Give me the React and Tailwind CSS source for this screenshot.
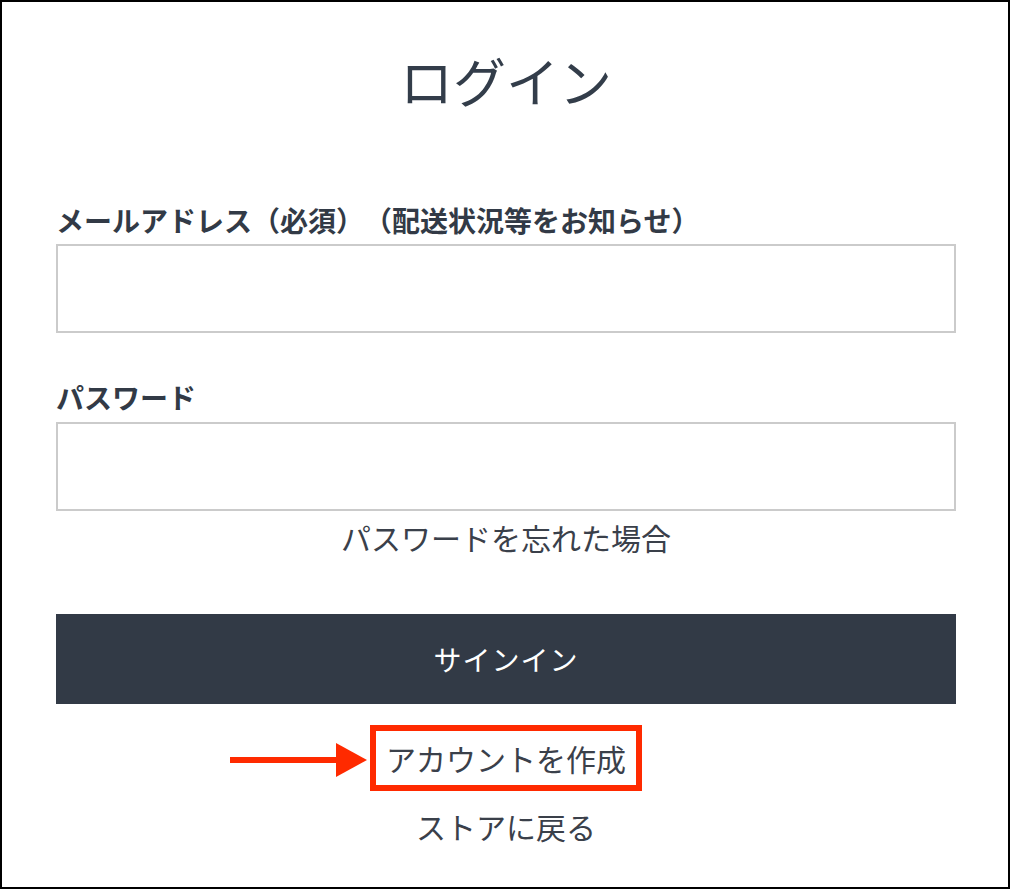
import React from 'react';

const font = { fontFamily: '"Noto Sans CJK JP", "Noto Sans", sans-serif' };

const Field = ({ label, labelClass, inputClass, type }) => (
    <>
        <label className={`block text-[28px] leading-[36px] font-bold text-[#323a46] [text-spacing-trim:space-all] ${labelClass}`}>{label}</label>
        <input
            type={type}
            className={`block w-full h-[89px] border-2 border-[#cbcbcb] bg-white outline-none px-4 text-[24px] ${inputClass}`}
        />
    </>
);

const App = () => {
    return (
        <div
            className="w-[1010px] h-[889px] border-2 border-black bg-white pl-[54px] pr-[52px] pt-[46px] text-[#323a46] flex flex-col"
            style={font}
        >
            <h1 className="text-center text-[53px] leading-[64px] font-normal text-[#333d4a]">ログイン</h1>

            <form className="flex flex-col" onSubmit={(e) => e.preventDefault()}>
                <Field label="メールアドレス（必須）（配送状況等をお知らせ）" labelClass="mt-[90px]" inputClass="mt-[6px]" type="email" />
                <Field label="パスワード" labelClass="mt-[46px]" inputClass="mt-[7px]" type="password" />

                <a className="mt-[6px] text-center text-[30px] leading-[40px] text-[#3a404a]">パスワードを忘れた場合</a>

                <button
                    type="submit"
                    className="mt-[57px] h-[90px] w-full bg-[#323a46] text-white text-[28px] tracking-[1px]"
                >
                    サインイン
                </button>

                <div className="mt-[21px] flex justify-center">
                    <div className="relative">
                        {/* 注釈の矢印 */}
                        <div className="absolute right-full mr-[3px] top-[18px] w-[137px] h-[34px] flex items-center">
                            <div className="h-[6px] w-[106px] bg-[#ff2a00]" />
                            <svg width="31" height="34" viewBox="0 0 31 34">
                                <polygon points="0,0 31,17 0,34" fill="#ff2a00" />
                            </svg>
                        </div>
                        <div className="h-[66px] border-[6px] border-[#ff2a00] px-[10px] flex items-center">
                            <span className="text-[30px] leading-[40px] text-[#3a404a]">アカウントを作成</span>
                        </div>
                    </div>
                </div>

                <a className="mt-[15px] text-center text-[30px] leading-[40px] text-[#3a404a]">ストアに戻る</a>
            </form>
        </div>
    );
};

export default App;
